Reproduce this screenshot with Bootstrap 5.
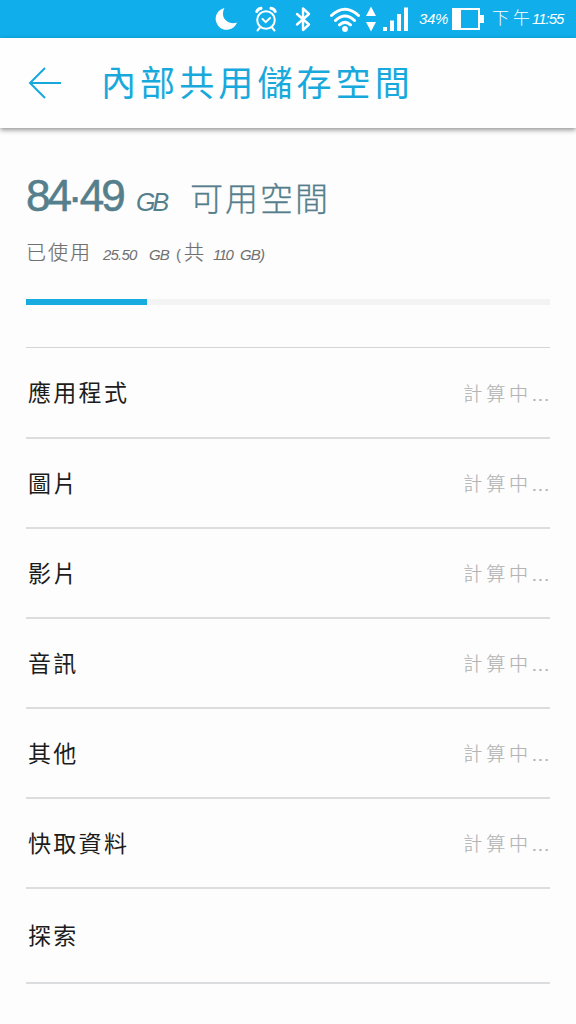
<!DOCTYPE html>
<html lang="zh-Hant">
  <head>
    <meta charset="utf-8">
    <meta name="viewport" content="width=device-width, initial-scale=1">
    <title>內部共用儲存空間</title>
    <link href="https://cdn.jsdelivr.net/npm/bootstrap@5.3.3/dist/css/bootstrap.min.css" rel="stylesheet">
    <style>
      body {
        background: #fdfdfd;
        color: #1c1c1c;
        font-family: "Liberation Sans", "Noto Sans CJK TC", sans-serif;
        overflow: hidden;
      }
      svg { display: block; flex-shrink: 0; }
      .status-bar { height: 38px; background: #10aeea; font-size: 15px; padding-left: 215px; }
      .status-bar span { line-height: 38px; font-style: italic; white-space: nowrap; }
      .status-bar .battery-level { margin-left: 10px; letter-spacing: -.3px; width: 29px; }
      .status-bar .clock-ampm { font-style: normal; font-size: 17px; font-weight: 300; letter-spacing: 4px; margin-left: 8px; }
      .status-bar .clock-time { letter-spacing: -1px; margin-left: -2px; }
      .app-bar { height: 90px; padding-left: 28px; color: #18a9dc; box-shadow: 0 2px 5px rgba(0, 0, 0, .42); background: #fefefe; }
      .app-bar h1 { font-size: 35px; font-weight: 400; letter-spacing: 4.1px; margin: 2px 0 0 39px; line-height: 50px; }
      .storage { padding: 0 26px; }
      .free-space { color: #557f8c; height: 54px; margin-top: 32px; line-height: 54px; }
      .free-number { font-size: 44px; font-weight: 400; letter-spacing: -3px; width: 110px; -webkit-text-stroke: .6px; }
      .dot { vertical-align: .2em; letter-spacing: -1.5px; }
      .free-unit { font-size: 25px; font-style: italic; letter-spacing: -3px; width: 54px; }
      .free-label { font-size: 33px; font-weight: 300; letter-spacing: 2px; -webkit-text-stroke: .3px; }
      .used-space { color: #707070; height: 28px; line-height: 28px; margin-top: 25px; font-size: 15px; }
      .used-space span, .used-space i { white-space: nowrap; flex-shrink: 0; }
      .used-space .cjk { font-size: 20px; font-weight: 300; letter-spacing: 2px; -webkit-text-stroke: .2px; }
      .used-space i { letter-spacing: -.8px; }
      .used-label { width: 77px; }
      .used-value { width: 46px; }
      .used-unit { width: 27px; }
      .used-open { width: 8px; }
      .used-total { width: 29px; }
      .used-space .total-value { width: 27px; letter-spacing: -1.5px; }
      .storage .progress { height: 6px; border-radius: 0; background: #f3f3f3; margin-top: 32px; }
      .storage .progress-bar { background: #18abdf; }
      .categories { margin-top: 42px; border-top: 1px solid #d4d6d8; }
      .categories .category { height: 90px; border-bottom: 2px solid #dcdddf; padding: 2px 0 0 2px; }
      .categories .category:first-child { height: 91px; }
      .categories .category:last-child { height: 95px; }
      .category-name { font-size: 23px; letter-spacing: 2.3px; }
      .category-size { font-size: 19px; font-weight: 300; letter-spacing: 3.8px; color: #b4b4b4; -webkit-text-stroke: .2px; margin-top: 3px; }
      .ellipsis { letter-spacing: .8px; }
    </style>
  </head>
  <body>
    <header>
      <div class="status-bar d-flex align-items-center text-white">
        <svg width="24" height="24" viewBox="0 0 24 24" fill="#fff"><path d="M9.500 1A11 11 0 1 0 22 15.500C15.500 18 8 13.500 8 7C8 4.500 8.500 2.500 9.500 1Z"/></svg>
        <svg class="ms-3" width="22" height="26" viewBox="0 0 22 26" fill="none" stroke="#fff" stroke-width="2" stroke-linecap="round"><circle cx="11" cy="14" r="8.800"/><path d="M7.500 13l3.200 3.200L15 12M5 21.500l-2.500 3M17 21.500l2.500 3"/><path stroke-width="3" d="M1.800 5.500Q3 2.800 6 2.300M20.200 5.500Q19 2.800 16 2.300"/></svg>
        <svg class="ms-3" width="20" height="26" viewBox="0 0 20 26" fill="none" stroke="#fff" stroke-width="2.400" stroke-linejoin="round" stroke-linecap="round"><path d="M4 8L16 18.500L10 24V2.500L16 8L4 18.500"/></svg>
        <svg class="ms-3" width="32" height="28" viewBox="0 0 32 28" fill="none" stroke="#fff" stroke-width="3" stroke-linecap="round"><path d="M2.500 10.500Q16-2 29.500 10.500M6.500 15.500Q16 6.500 25.500 15.500M10.500 19.800Q16 15 21.500 19.800"/><circle cx="16" cy="24" r="2.900" fill="#fff" stroke="none"/></svg>
        <svg class="ms-1" width="12" height="26" viewBox="0 0 12 26" fill="#fff"><path d="M6 .5l5 9.500H1zM6 25.500L1 16h10z"/></svg>
        <svg class="ms-1" width="28" height="26" viewBox="0 0 28 26" fill="#fff"><path d="M2 21h4v4H2zM9 14.500h4V25H9zM16 8h4v17h-4zM23 1.500h4V25h-4z"/></svg>
        <span class="battery-level">34%</span>
        <svg class="ms-1" width="32" height="24" viewBox="0 0 32 24"><path fill="#fff" fill-rule="evenodd" d="M0 1h28v7h4v8h-4v7H0zM9 3v18h17V3z"/></svg>
        <span class="clock-ampm">下午</span><span class="clock-time">11:55</span>
      </div>
      <div class="app-bar d-flex align-items-center">
        <svg width="34" height="34" viewBox="0 0 34 34" fill="none" stroke="currentColor" stroke-width="2"><path d="M33 17H2M17 2L2 17l15 15"/></svg>
        <h1>內部共用儲存空間</h1>
      </div>
    </header>
    <main class="storage">
      <div class="free-space d-flex align-items-baseline">
        <span class="free-number">84<span class="dot">.</span>49</span>
        <span class="free-unit">GB</span>
        <span class="free-label">可用空間</span>
      </div>
      <div class="used-space d-flex align-items-baseline">
        <span class="cjk used-label">已使用</span>
        <i class="used-value">25.50</i>
        <i class="used-unit">GB</i>
        <span class="used-open">(</span>
        <span class="cjk used-total">共</span>
        <i class="total-value">110</i>
        <i class="total-unit">GB)</i>
      </div>
      <div class="progress" role="progressbar">
        <div class="progress-bar" style="width: 23.1%"></div>
      </div>
      <div class="categories" id="categories"></div>
    </main>
    <script src="https://cdn.jsdelivr.net/npm/bootstrap@5.3.3/dist/js/bootstrap.bundle.min.js"></script>
    <script>
      const categories = [
        { name: "應用程式", pending: true },
        { name: "圖片", pending: true },
        { name: "影片", pending: true },
        { name: "音訊", pending: true },
        { name: "其他", pending: true },
        { name: "快取資料", pending: true },
        { name: "探索", pending: false },
      ];

      let html = "";
      categories.forEach((item) => {
        html += '<div class="category d-flex align-items-center justify-content-between">';
        html += `<span class="category-name">${item.name}</span>`;
        if (item.pending) {
          html += '<span class="category-size">計算中<span class="ellipsis">...</span></span>';
        }
        html += "</div>";
      });
      document.querySelector("#categories").innerHTML = html;
    </script>
  </body>
</html>
